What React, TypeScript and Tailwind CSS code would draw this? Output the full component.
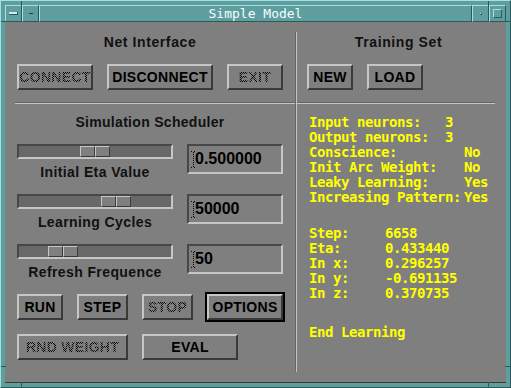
import type { ReactNode } from 'react';

const raised = 'border-2 border-t-[#c6c6c6] border-l-[#c6c6c6] border-b-[#3a3a3a] border-r-[#3a3a3a]';
const sunken = 'border-2 border-t-[#474747] border-l-[#474747] border-b-[#c6c6c6] border-r-[#c6c6c6]';
const stipple =
  'text-transparent bg-clip-text bg-[image:repeating-conic-gradient(#000_0_25%,transparent_0_50%)] bg-size-[2px_2px]';

function Btn({ label, className, disabled }: { label: string; className: string; disabled?: boolean }) {
  return (
    <div className={`${raised} ${className} h-[26px] shrink-0 bg-[#7f7f7f] flex items-center justify-center`}>
      <span className={`text-[14px] font-bold tracking-[0.3px] leading-4 ${disabled ? stipple : 'text-black'}`}>
        {label}
      </span>
    </div>
  );
}

function Cursor() {
  return (
    <svg width="5" height="17" viewBox="0 0 5 17" className="shrink-0">
      <rect x="0" y="0" width="1" height="1" fill="#000" />
      <rect x="3" y="0" width="1" height="1" fill="#000" />
      <rect x="0" y="16" width="1" height="1" fill="#000" />
      <rect x="3" y="16" width="1" height="1" fill="#000" />
      {[1, 3, 5, 7, 9, 11, 13, 15].map((y) => (
        <rect key={y} x="2" y={y} width="1" height="1" fill="#000" />
      ))}
    </svg>
  );
}

function SliderRow({ label, value, thumb }: { label: string; value: string; thumb: string }) {
  return (
    <div className="flex pl-[12px] gap-[14px]">
      <div className="w-[156px] flex flex-col">
        <div className={`${sunken} h-[15px] bg-[#686868] flex`}>
          <div className={`${thumb} w-[30px] h-full flex`}>
            <div className="w-[15px] h-full border border-t-[#c6c6c6] border-l-[#c6c6c6] border-b-[#3a3a3a] border-r-[#3a3a3a] bg-[#7f7f7f]" />
            <div className="w-[15px] h-full border border-t-[#c6c6c6] border-l-[#c6c6c6] border-b-[#3a3a3a] border-r-[#3a3a3a] bg-[#7f7f7f]" />
          </div>
        </div>
        <div className="mt-[5px] text-center text-[14px] leading-4 font-bold tracking-[0.4px] text-[#111]">{label}</div>
      </div>
      <div className={`${sunken} w-[96px] h-[30px] flex items-center pl-[2px]`}>
        <Cursor />
        <span className="-ml-[1px] text-[16px] font-bold leading-4 text-black">{value}</span>
      </div>
    </div>
  );
}

function Line({ label, value, w }: { label: string; value?: string; w: string }) {
  return (
    <div className="flex h-[15px] leading-[15px] whitespace-pre">
      <span className={w}>{label}</span>
      {value && <span>{value}</span>}
    </div>
  );
}

function TitleBtn({ children }: { children: ReactNode }) {
  return (
    <div className="w-[17px] h-full shrink-0 border border-t-[#a6e0e0] border-l-[#a6e0e0] border-b-[#2c5a5a] border-r-[#2c5a5a] flex items-center justify-center">
      {children}
    </div>
  );
}

export default function App() {
  return (
    <div className="w-[511px] h-[388px] bg-[#5f9e9f] border border-t-[#a6e0e0] border-l-[#a6e0e0] border-b-[#2c5a5a] border-r-[#2c5a5a] p-[4px] flex flex-col font-['Liberation_Sans',sans-serif] relative overflow-hidden">
      {/* frame corner marks */}
      <div className="absolute left-[20px] top-0 w-px h-[5px] bg-[#2c5a5a]" />
      <div className="absolute right-[21px] top-0 w-px h-[5px] bg-[#2c5a5a]" />
      <div className="absolute left-[20px] bottom-0 w-px h-[5px] bg-[#2c5a5a]" />
      <div className="absolute right-[21px] bottom-0 w-px h-[5px] bg-[#2c5a5a]" />
      <div className="absolute left-0 top-[20px] h-px w-[5px] bg-[#2c5a5a]" />
      <div className="absolute right-0 top-[20px] h-px w-[5px] bg-[#2c5a5a]" />
      <div className="absolute left-0 bottom-[20px] h-px w-[5px] bg-[#2c5a5a]" />
      <div className="absolute right-0 bottom-[20px] h-px w-[5px] bg-[#2c5a5a]" />

      {/* title bar */}
      <div className="h-[17px] flex shrink-0">
        <TitleBtn>
          <div className="w-[9px] h-[3px] bg-[#c8eeee] border-b border-r border-[#2c5a5a]" />
        </TitleBtn>
        <TitleBtn>
          <div className="w-[4px] h-px bg-[#1e3e3e]" />
        </TitleBtn>
        <div className="flex-1 border border-t-[#a6e0e0] border-l-[#a6e0e0] border-b-[#2c5a5a] border-r-[#2c5a5a] flex items-center justify-center text-[13px] leading-none text-[#f4ffff] font-['DejaVu_Sans_Mono',monospace]">
          Simple Model
        </div>
        <TitleBtn>
          <div className="w-[2px] h-[2px] bg-[#c8eeee] border-b border-r border-[#2c5a5a]" />
        </TitleBtn>
        <TitleBtn>
          <div className="w-[9px] h-[9px] border border-t-[#a6e0e0] border-l-[#a6e0e0] border-b-[#2c5a5a] border-r-[#2c5a5a]" />
        </TitleBtn>
      </div>

      {/* content */}
      <div className="h-[361px] bg-[#7f7f7f] flex border-b border-[#3a3a3a]">
        {/* left column */}
        <div className="w-[290px] shrink-0 flex flex-col">
          <div className="h-[80px] flex flex-col">
            <div className="pt-[12px] text-center text-[14px] leading-4 font-bold tracking-[0.6px] text-[#111]">
              Net Interface
            </div>
            <div className="mt-[14px] pl-[12px] flex gap-[14px]">
              <Btn label="CONNECT" className="w-[76px]" disabled />
              <Btn label="DISCONNECT" className="w-[106px]" />
              <Btn label="EXIT" className="w-[56px]" disabled />
            </div>
          </div>
          <div className="ml-[10px] h-[2px] border-t border-t-[#666] border-b border-b-[#c4c4c4]" />

          <div className="mt-[10px] text-center text-[14px] leading-4 font-bold tracking-[0.3px] text-[#111]">
            Simulation Scheduler
          </div>
          <div className="mt-[14px] flex flex-col gap-[14px]">
            <SliderRow label="Initial Eta Value" value="0.500000" thumb="ml-[61px]" />
            <SliderRow label="Learning Cycles" value="50000" thumb="ml-[82px]" />
            <SliderRow label="Refresh Frequence" value="50" thumb="ml-[29px]" />
          </div>

          <div className="mt-[12px] pl-[12px] h-[30px] flex items-center">
            <Btn label="RUN" className="w-[46px]" />
            <Btn label="STEP" className="w-[51px] ml-[14px]" />
            <Btn label="STOP" className="w-[51px] ml-[14px]" disabled />
            <div className="ml-[12px] w-[80px] h-[30px] border-2 border-black">
              <Btn label="OPTIONS" className="w-full" />
            </div>
          </div>
          <div className="mt-[12px] pl-[12px] flex gap-[14px]">
            <Btn label="RND WEIGHT" className="w-[111px]" disabled />
            <Btn label="EVAL" className="w-[96px]" />
          </div>
        </div>

        {/* vertical divider */}
        <div className="w-[2px] shrink-0 my-[10px] border-l border-l-[#666] border-r border-r-[#c4c4c4]" />

        {/* right column */}
        <div className="flex-1 flex flex-col">
          <div className="h-[80px] flex flex-col">
            <div className="pt-[12px] pr-[6px] text-center text-[14px] leading-4 font-bold tracking-[0.6px] text-[#111]">
              Training Set
            </div>
            <div className="mt-[14px] pl-[10px] flex gap-[14px]">
              <Btn label="NEW" className="w-[46px]" />
              <Btn label="LOAD" className="w-[56px]" />
            </div>
          </div>
          <div className="mr-[11px] h-[2px] border-t border-t-[#666] border-b border-b-[#c4c4c4]" />

          <div className="pl-[12px] text-[14px] font-bold tracking-[-0.43px] text-[#ffff00] font-['DejaVu_Sans_Mono',monospace]">
            <div className="mt-[11px]">
              <Line label="Input neurons:" value="3" w="w-[136px]" />
              <Line label="Output neurons:" value="3" w="w-[136px]" />
              <Line label="Conscience:" value="No" w="w-[155px]" />
              <Line label="Init Arc Weight:" value="No" w="w-[155px]" />
              <Line label="Leaky Learning:" value="Yes" w="w-[155px]" />
              <Line label="Increasing Pattern:" value="Yes" w="w-[155px]" />
            </div>
            <div className="mt-[21px]">
              <Line label="Step:" value="6658" w="w-[76px]" />
              <Line label="Eta:" value="0.433440" w="w-[76px]" />
              <Line label="In x:" value="0.296257" w="w-[76px]" />
              <Line label="In y:" value="-0.691135" w="w-[76px]" />
              <Line label="In z:" value="0.370735" w="w-[76px]" />
            </div>
            <div className="mt-[24px]">
              <Line label="End Learning" w="w-auto" />
            </div>
          </div>
        </div>
      </div>
    </div>
  );
}
